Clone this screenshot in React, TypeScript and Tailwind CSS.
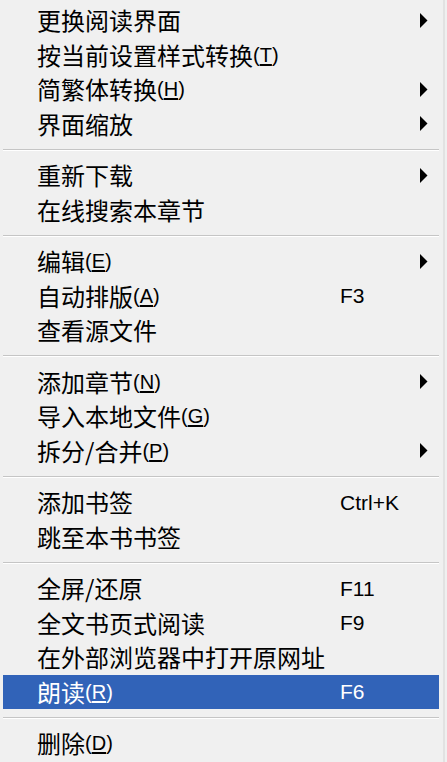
import { Fragment } from 'react'

type Item = {
  label: string
  key?: string
  shortcut?: string
  sub?: boolean
  active?: boolean
}

const groups: Item[][] = [
  [
    { label: '更换阅读界面', sub: true },
    { label: '按当前设置样式转换', key: 'T' },
    { label: '简繁体转换', key: 'H', sub: true },
    { label: '界面缩放', sub: true },
  ],
  [
    { label: '重新下载', sub: true },
    { label: '在线搜索本章节' },
  ],
  [
    { label: '编辑', key: 'E', sub: true },
    { label: '自动排版', key: 'A', shortcut: 'F3' },
    { label: '查看源文件' },
  ],
  [
    { label: '添加章节', key: 'N', sub: true },
    { label: '导入本地文件', key: 'G' },
    { label: '拆分/合并', key: 'P', sub: true },
  ],
  [
    { label: '添加书签', shortcut: 'Ctrl+K' },
    { label: '跳至本书书签' },
  ],
  [
    { label: '全屏/还原', shortcut: 'F11' },
    { label: '全文书页式阅读', shortcut: 'F9' },
    { label: '在外部浏览器中打开原网址' },
    { label: '朗读', key: 'R', shortcut: 'F6', active: true },
  ],
  [{ label: '删除', key: 'D' }],
]

const latin = "font-['Liberation_Sans','DejaVu_Sans',sans-serif]"

function Row({ item }: { item: Item }) {
  return (
    <div
      className={`flex items-center h-[34.5px] pl-[34px] pr-[8px] ${
        item.active ? 'bg-[#3163b8] text-white' : 'text-black'
      }`}
    >
      <div className="flex items-center w-[303px]">
        <span className="text-[24px] leading-none">{item.label}</span>
        {item.key && (
          <span className={`${latin} text-[20px] leading-none`}>
            (<span className="underline underline-offset-2">{item.key}</span>)
          </span>
        )}
      </div>
      <div className={`flex-1 ${latin} text-[21px] leading-none`}>{item.shortcut}</div>
      {item.sub && (
        <svg width="9" height="15" viewBox="0 0 9 15" className="mr-[3px]">
          <path d="M1 0 L8.5 7.5 L1 15 Z" fill="#000" />
        </svg>
      )}
    </div>
  )
}

export default function App() {
  return (
    <div className="w-[447px] h-[762px] bg-[#f0f0f0] font-['Noto_Sans_CJK_SC',sans-serif] overflow-hidden">
      <div className="h-full w-[445px] border-r-2 border-[#e2e2e2] pl-[3px] pr-[4px] pt-[3px]">
        {groups.map((g, i) => (
          <Fragment key={i}>
            {i > 0 && (
              <div className="h-[17px] flex flex-col justify-center">
                <div className="h-px bg-[#c5c5c5]" />
                <div className="h-px bg-white" />
              </div>
            )}
            {g.map((item) => (
              <Row key={item.label} item={item} />
            ))}
          </Fragment>
        ))}
      </div>
    </div>
  )
}
